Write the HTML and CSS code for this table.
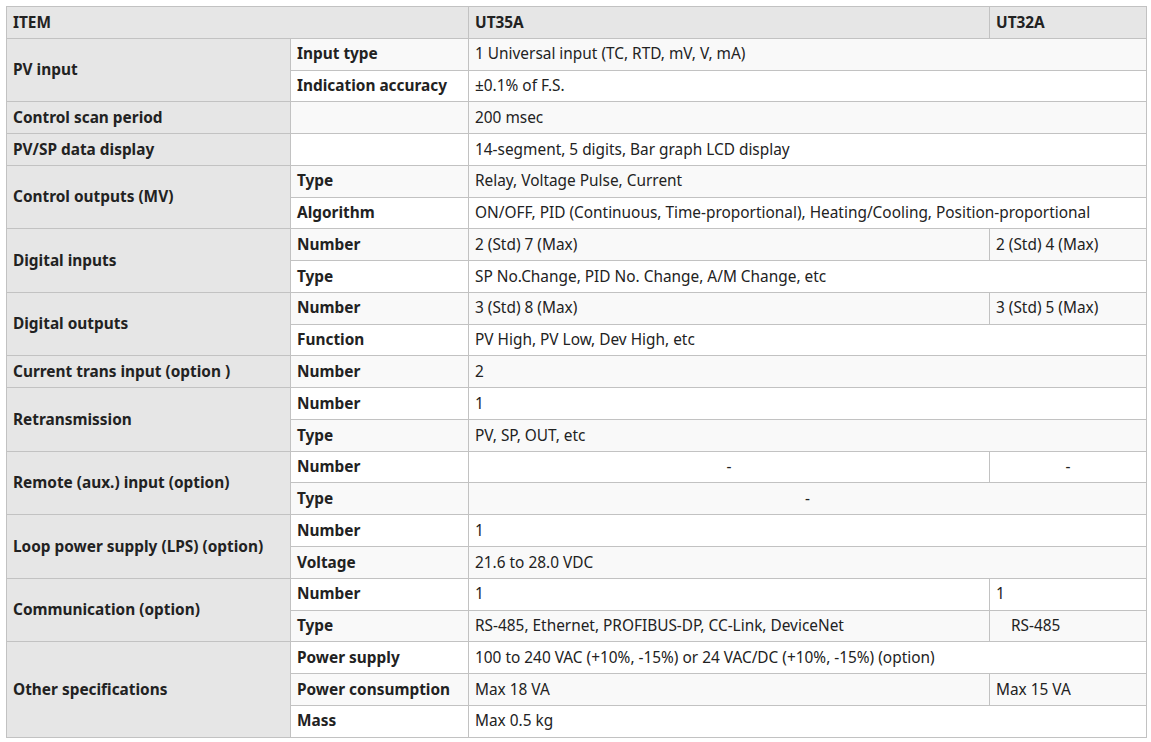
FILE: index.html
```html
<!DOCTYPE html>
<html lang="en">
<head>
<meta charset="utf-8">
<title>Specifications</title>
<link rel="stylesheet" href="styles.css">
</head>
<body>
<table class="spec">
  <colgroup>
    <col class="c1"><col class="c2"><col class="c3"><col class="c4">
  </colgroup>
  <thead>
    <tr><th colspan="2">ITEM</th><th>UT35A</th><th>UT32A</th></tr>
  </thead>
  <tbody>
    <tr><th class="grp" rowspan="2">PV input</th><th>Input type</th><td colspan="2">1 Universal input (TC, RTD, mV, V, mA)</td></tr>
    <tr><th>Indication accuracy</th><td colspan="2">±0.1% of F.S.</td></tr>
    <tr><th class="grp">Control scan period</th><th></th><td colspan="2">200 msec</td></tr>
    <tr><th class="grp">PV/SP data display</th><th></th><td colspan="2">14-segment, 5 digits, Bar graph LCD display</td></tr>
    <tr><th class="grp" rowspan="2">Control outputs (MV)</th><th>Type</th><td colspan="2">Relay, Voltage Pulse, Current</td></tr>
    <tr><th>Algorithm</th><td colspan="2">ON/OFF, PID (Continuous, Time-proportional), Heating/Cooling, Position-proportional</td></tr>
    <tr><th class="grp" rowspan="2">Digital inputs</th><th>Number</th><td>2 (Std) 7 (Max)</td><td>2 (Std) 4 (Max)</td></tr>
    <tr><th>Type</th><td colspan="2">SP No.Change, PID No. Change, A/M Change, etc</td></tr>
    <tr><th class="grp" rowspan="2">Digital outputs</th><th>Number</th><td>3 (Std) 8 (Max)</td><td>3 (Std) 5 (Max)</td></tr>
    <tr><th>Function</th><td colspan="2">PV High, PV Low, Dev High, etc</td></tr>
    <tr><th class="grp">Current trans input (option )</th><th>Number</th><td colspan="2">2</td></tr>
    <tr><th class="grp" rowspan="2">Retransmission</th><th>Number</th><td colspan="2">1</td></tr>
    <tr><th>Type</th><td colspan="2">PV, SP, OUT, etc</td></tr>
    <tr><th class="grp" rowspan="2">Remote (aux.) input (option)</th><th>Number</th><td class="ctr">-</td><td class="ctr">-</td></tr>
    <tr><th>Type</th><td class="ctr" colspan="2">-</td></tr>
    <tr><th class="grp" rowspan="2">Loop power supply (LPS) (option)</th><th>Number</th><td colspan="2">1</td></tr>
    <tr><th>Voltage</th><td colspan="2">21.6 to 28.0 VDC</td></tr>
    <tr><th class="grp" rowspan="2">Communication (option)</th><th>Number</th><td>1</td><td>1</td></tr>
    <tr><th>Type</th><td>RS-485, Ethernet, PROFIBUS-DP, CC-Link, DeviceNet</td><td class="ind">RS-485</td></tr>
    <tr><th class="grp" rowspan="3">Other specifications</th><th>Power supply</th><td colspan="2">100 to 240 VAC (+10%, -15%) or 24 VAC/DC (+10%, -15%) (option)</td></tr>
    <tr><th>Power consumption</th><td>Max 18 VA</td><td>Max 15 VA</td></tr>
    <tr><th>Mass</th><td colspan="2">Max 0.5 kg</td></tr>
  </tbody>
</table>
</body>
</html>
```

FILE: styles.css
```css
html, body {
  margin: 0;
  padding: 0;
  background: #fff;
}
body {
  padding: 6px 6px 0 6px;
  font-family: "Noto Sans", "Open Sans", "Liberation Sans", sans-serif;
  font-size: 15.4px;
  color: #222;
}
.spec {
  border-collapse: collapse;
  table-layout: fixed;
  width: 1140px;
}
.c1 { width: 284px; }
.c2 { width: 178px; }
.c3 { width: 521px; }
.c4 { width: 157px; }
.spec th,
.spec td {
  border: 1px solid #c2c2c2;
  padding: 5.6px 6px 4.4px 6px;
  line-height: 20.78px;
  text-align: left;
  vertical-align: middle;
  white-space: nowrap;
}
.spec th {
  font-weight: 700;
}
.spec td {
  font-weight: 400;
}
.spec thead th {
  background: #e6e6e6;
}
.spec tbody tr:nth-child(odd) {
  background: #f9f9f9;
}
.spec tbody tr:nth-child(even) {
  background: #fff;
}
.spec tbody th.grp {
  background: #e6e6e6;
}
.spec td.ctr {
  text-align: center;
}
.spec td.ind {
  padding-left: 21px;
}
```
